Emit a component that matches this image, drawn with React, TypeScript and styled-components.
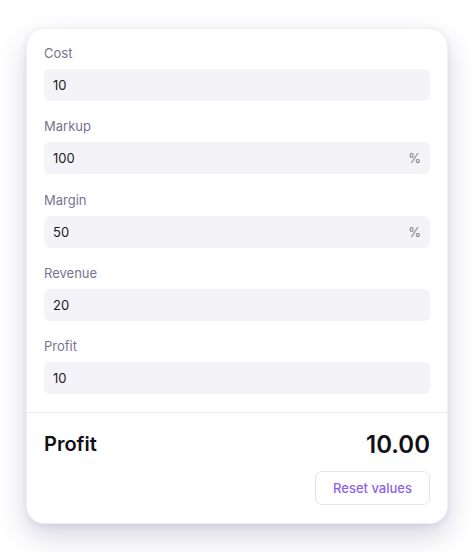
import React, { useState } from "react";
import styled, { createGlobalStyle } from "styled-components";

const Global = createGlobalStyle`
  html, body { margin: 0; padding: 0; background: #ffffff; }
  body { font-family: Inter, "Noto Sans", sans-serif; -webkit-font-smoothing: antialiased; }
  * { box-sizing: border-box; }
`;

const Page = styled.div`
  padding: 28px 26px;
`;

const Card = styled.div`
  width: 422px;
  background: #fff;
  border-radius: 18px;
  border: 1px solid #efeff4;
  box-shadow: 0 12px 28px rgba(70, 60, 120, 0.22), 0 2px 6px rgba(70, 60, 120, 0.08);
  overflow: hidden;
`;

const Form = styled.div`
  display: flex;
  flex-direction: column;
  gap: 17.25px;
  padding: 16px 17px 18px;
  border-bottom: 1px solid #ebebf0;
`;

const Field = styled.label`
  display: flex;
  flex-direction: column;
  gap: 8px;
`;

const Label = styled.span`
  font-size: 13px;
  line-height: 16px;
  color: #76748f;
`;

const InputBox = styled.div`
  display: flex;
  align-items: center;
  height: 32px;
  padding: 0 9px 0 9px;
  background: #f4f4f8;
  border-radius: 6px;
`;

const Input = styled.input`
  flex: 1;
  border: none;
  outline: none;
  background: transparent;
  font-family: inherit;
  font-size: 13px;
  color: #1b1b22;
  padding: 0;
`;

const Suffix = styled.span`
  font-size: 13px;
  color: #7a7a86;
`;

const Footer = styled.div`
  display: flex;
  flex-direction: column;
  gap: 11px;
  padding: 15px 17px 18px;
`;

const ResultRow = styled.div`
  display: flex;
  align-items: center;
  justify-content: space-between;
  height: 32px;
`;

const ResultLabel = styled.span`
  font-size: 20px;
  font-weight: 600;
  color: #111116;
`;

const ResultValue = styled.span`
  font-size: 24px;
  font-weight: 600;
  color: #111116;
`;

const Actions = styled.div`
  display: flex;
  justify-content: flex-end;
`;

const ResetButton = styled.button`
  height: 34px;
  width: 115px;
  background: #fff;
  border: 1px solid #e4e4ea;
  border-radius: 7px;
  font-family: inherit;
  font-size: 13px;
  font-weight: 500;
  color: #8f63e6;
  cursor: pointer;
`;

const fields = [
  { key: "cost", label: "Cost", value: "10" },
  { key: "markup", label: "Markup", value: "100", suffix: "%" },
  { key: "margin", label: "Margin", value: "50", suffix: "%" },
  { key: "revenue", label: "Revenue", value: "20" },
  { key: "profit", label: "Profit", value: "10" },
];

export default function App() {
  const [values, setValues] = useState<Record<string, string>>(
    Object.fromEntries(fields.map((f) => [f.key, f.value]))
  );
  return (
    <Page>
      <Global />
      <Card>
        <Form>
          {fields.map((f) => (
            <Field key={f.key}>
              <Label>{f.label}</Label>
              <InputBox>
                <Input
                  value={values[f.key]}
                  onChange={(e) => setValues({ ...values, [f.key]: e.target.value })}
                />
                {f.suffix && <Suffix>{f.suffix}</Suffix>}
              </InputBox>
            </Field>
          ))}
        </Form>
        <Footer>
          <ResultRow>
            <ResultLabel>Profit</ResultLabel>
            <ResultValue>10.00</ResultValue>
          </ResultRow>
          <Actions>
            <ResetButton>Reset values</ResetButton>
          </Actions>
        </Footer>
      </Card>
    </Page>
  );
}
